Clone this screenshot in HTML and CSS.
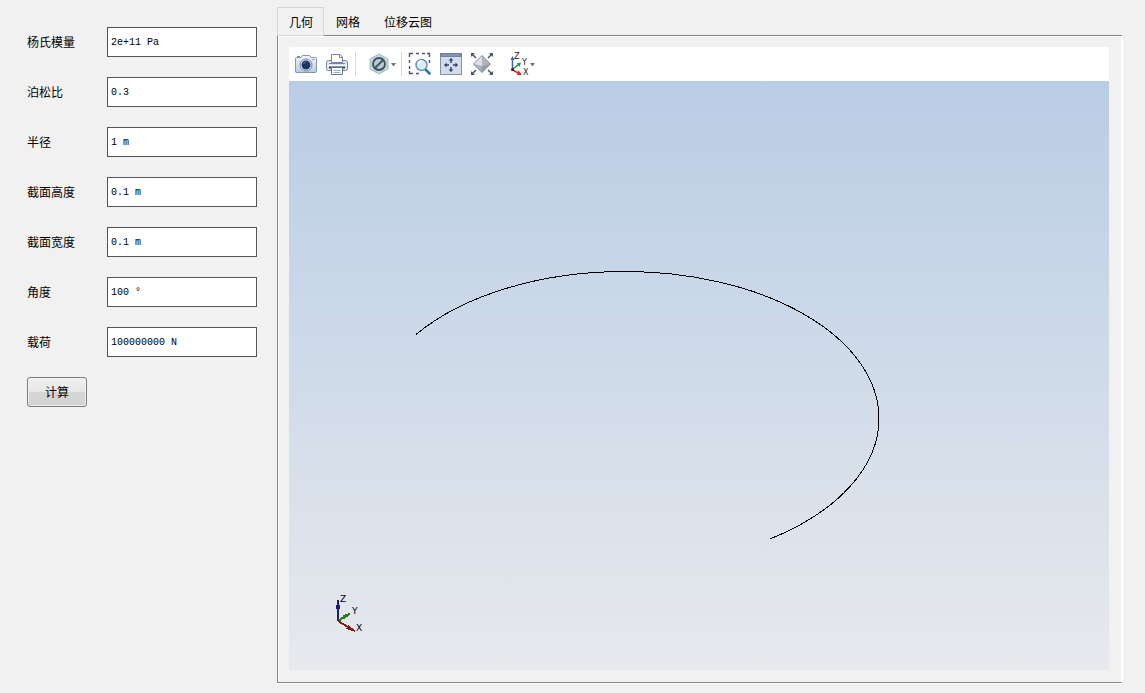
FILE: index.html
```html
<!DOCTYPE html>
<html lang="zh-CN">
<head>
<meta charset="utf-8">
<title>几何</title>
<link rel="stylesheet" href="styles.css">
</head>
<body>
<form class="params">
  <div class="row"><label for="young">杨氏模量</label><input class="field" id="young" type="text" value="2e+11 Pa"></div>
  <div class="row"><label for="poisson">泊松比</label><input class="field" id="poisson" type="text" value="0.3"></div>
  <div class="row"><label for="radius">半径</label><input class="field" id="radius" type="text" value="1 m"></div>
  <div class="row"><label for="height">截面高度</label><input class="field" id="height" type="text" value="0.1 m"></div>
  <div class="row"><label for="width">截面宽度</label><input class="field" id="width" type="text" value="0.1 m"></div>
  <div class="row"><label for="angle">角度</label><input class="field" id="angle" type="text" value="100 °"></div>
  <div class="row"><label for="load">载荷</label><input class="field" id="load" type="text" value="100000000 N"></div>
  <button class="compute" type="button">计算</button>
</form>
<main class="main">
  <div class="tabs" role="tablist">
    <button class="tab active" type="button" role="tab" aria-selected="true">几何</button>
    <button class="tab" type="button" role="tab" aria-selected="false">网格</button>
    <button class="tab" type="button" role="tab" aria-selected="false">位移云图</button>
  </div>
  <section class="panel" role="tabpanel">
    <div class="toolbar">
      <div class="group">
        <button class="tool" type="button" aria-label="截图">
          <svg width="24" height="24" viewBox="0 0 24 24">
            <defs><linearGradient id="cam" x1="0" y1="0" x2="0" y2="1"><stop offset="0" stop-color="#f4f8fc"/><stop offset="1" stop-color="#b9cbe2"/></linearGradient></defs>
            <path d="M2.5 5.5H7L8.5 3.5H15.5L17 5.5H21.5Q22.5 5.5 22.5 6.5V19.5Q22.5 20.5 21.5 20.5H2.5Q1.5 20.5 1.5 19.5V6.5Q1.5 5.5 2.5 5.5Z" fill="url(#cam)" stroke="#8093b5"/>
            <path d="M3 4.5H6" stroke="#8093b5"/>
            <circle cx="12" cy="13" r="6" fill="#dfe9f4" stroke="#7189ae"/>
            <circle cx="12" cy="13" r="4.5" fill="#1c3766"/>
            <path d="M9.5 12A3 3 0 0 1 12 10" fill="none" stroke="#5f7ca6"/>
            <path d="M18 7.5H20.5" stroke="#8295b3"/>
          </svg>
        </button>
        <button class="tool" type="button" aria-label="打印">
          <svg width="24" height="24" viewBox="0 0 24 24">
            <rect x="1.5" y="8.5" width="21" height="10" rx="2" fill="#dce6f2" stroke="#7484a6"/>
            <path d="M6.5 10.5V2.5H15L17.5 5V10.5Z" fill="#fff" stroke="#7484a6"/>
            <path d="M14.5 3V5.5H17" fill="none" stroke="#7484a6"/>
            <path d="M4 11.5H20" stroke="#7484a6"/>
            <path d="M2 13.5H22" stroke="#fff"/>
            <path d="M4 15.5H20" stroke="#31456f" stroke-width="2"/>
            <path d="M6.5 15.5H17.5V22.5H6.5Z" fill="#fff" stroke="#63749a"/>
            <path d="M8.5 18.5H15.5M8.5 20.5H15.5" stroke="#9aabc7"/>
          </svg>
        </button>
      </div>
      <div class="group display">
        <button class="tool" type="button" aria-label="显示模式">
          <svg width="22" height="24" viewBox="0 0 22 24">
            <path d="M10 2L19 7V17L10 22L1 17V7Z" fill="#c1d3d8" stroke="#a3bbc6"/>
            <path d="M10 3V21M2 7L18 17M18 7L2 17" stroke="#dfeaec"/>
            <circle cx="10" cy="12" r="6" fill="#b3cbd1" stroke="#3c5164" stroke-width="1.8"/>
            <path d="M6 16L14 8" stroke="#3c5164" stroke-width="1.8"/>
          </svg>
          <svg width="5" height="3" viewBox="0 0 5 3"><path d="M0 0H5L3 3H2Z" fill="#777"/></svg>
        </button>
      </div>
      <div class="group view">
        <button class="tool" type="button" aria-label="框选放大">
          <svg width="24" height="24" viewBox="0 0 24 24">
            <path d="M1.5 5V1.5H5M8 1.5H11M14 1.5H17M19 1.5H21.5V5M21.5 8V11M1.5 8V11M1.5 14V17M1.5 19V21.5H5M8 21.5H11" fill="none" stroke="#4a5682" stroke-width="1.4"/>
            <path d="M17 17L21.5 21.5" stroke="#2a78b8" stroke-width="2.6" stroke-linecap="round"/>
            <circle cx="13.5" cy="13" r="5.5" fill="#dcecf8" stroke="#6294c4" stroke-width="1.5"/>
            <path d="M10 12Q11 9 14 9" fill="none" stroke="#fff" stroke-width="2"/>
          </svg>
        </button>
        <button class="tool" type="button" aria-label="适应窗口">
          <svg width="24" height="24" viewBox="0 0 24 24">
            <rect x="1.5" y="1.5" width="21" height="21" fill="#d3dcea" stroke="#8191b0"/>
            <path d="M1 1H23V5H1Z" fill="#6f82a6"/>
            <path d="M3 3H21" stroke="#95a5c2"/>
            <path d="M12 6L14.5 8.5H12.7V11H11.3V8.5H9.5ZM12 20L9.5 17.5H11.3V15H12.7V17.5H14.5ZM5 13L7.5 10.5V12.3H10V13.7H7.5V15.5ZM19 13L16.5 10.5V12.3H14V13.7H16.5V15.5Z" fill="#303f67"/>
          </svg>
        </button>
        <button class="tool" type="button" aria-label="全部显示">
          <svg width="24" height="24" viewBox="0 0 24 24">
            <path d="M12 3.5L20.5 12L12 20.5Z" fill="#b0b5bf"/>
            <path d="M12 3.5L3.5 12L12 20.5Z" fill="#dde0e6"/>
            <path d="M3.5 12L12 14L20.5 12L12 20.5Z" fill="#858d9c" opacity=".6"/>
            <path d="M12 3.5L20.5 12L12 20.5L3.5 12Z" fill="none" stroke="#858c99"/>
            <path d="M1 1H5L1 5ZM23 1V5L19 1ZM1 23V19L5 23ZM23 23H19L23 19Z" fill="#45537a"/>
            <path d="M2 2L6 6M22 2L18 6M2 22L6 18M22 22L18 18" stroke="#45537a" stroke-width="1.5"/>
          </svg>
        </button>
      </div>
      <div class="group axes">
        <button class="tool" type="button" aria-label="视图方向">
          <svg class="orient" width="22" height="24" viewBox="0 0 22 24">
            <path d="M4.5 17.5V6" stroke="#3f66bb" stroke-width="1.5"/>
            <path d="M4.5 4L6.5 8H2.5Z" fill="#3f66bb"/>
            <path d="M4 17.5L10 13" stroke="#229443" stroke-width="1.5"/>
            <path d="M13 10.5L11.5 15L8.5 11.5Z" fill="#229443"/>
            <path d="M4 17.5L10 21" stroke="#ee2222" stroke-width="1.5"/>
            <path d="M14 23L9 23L10.5 18.5Z" fill="#ee2222"/>
            <circle cx="4.5" cy="17.5" r="1.5" fill="#222"/>
            <text x="6" y="7">Z</text>
            <text x="14" y="13">Y</text>
            <text x="15" y="23">X</text>
          </svg>
          <svg width="5" height="3" viewBox="0 0 5 3"><path d="M0 0H5L3 3H2Z" fill="#777"/></svg>
        </button>
      </div>
    </div>
    <div class="viewport">
      <svg class="curve" viewBox="0 0 820 589" shape-rendering="crispEdges">
        <path d="M127 253.5A254 147 0 0 1 336 190.5A254 147 0 0 1 590 337.5A254 147 0 0 1 481 458" fill="none" stroke="#000"/>
      </svg>
      <svg class="triad" width="30" height="40" viewBox="0 0 30 40" shape-rendering="crispEdges">
        <path d="M3 5V26" stroke="#1c1c80" stroke-width="2"/>
        <path d="M1 10H5V14H1Z" fill="#1c1c80"/>
        <path d="M3 26L9 22" stroke="#1c801c" stroke-width="2"/>
        <path d="M15 18L8 20L9 24L15 20Z" fill="#1c801c"/>
        <path d="M3 26L13 32" stroke="#801c1c" stroke-width="2"/>
        <path d="M20 37L11 34L13 30L20 35Z" fill="#801c1c"/>
        <text x="5" y="7">Z</text>
        <text x="17" y="19">Y</text>
        <text x="21" y="36">X</text>
      </svg>
    </div>
  </section>
</main>
</body>
</html>
```
FILE: styles.css
```css
* { box-sizing: border-box; }

body {
  margin: 0;
  min-height: 100vh;
  display: flex;
  gap: 20px;
  padding: 7px 22px 9px 27px;
  background: #f1f1f1;
  color: #000;
  font: 12px/18px "Noto Sans CJK SC", sans-serif;
}

button { font: inherit; color: inherit; }

.params {
  display: flex;
  flex-direction: column;
  align-items: flex-start;
  gap: 20px;
  width: 230px;
  padding-top: 20px;
}

.row {
  display: grid;
  grid-template-columns: 80px 1fr;
  align-items: center;
  width: 100%;
}

.field {
  width: 100%;
  height: 30px;
  padding: 0 3px;
  border: 1px solid #555558;
  border-radius: 0;
  background: #fff;
  color: #000;
  font: 10px "Liberation Mono", monospace;
}

.compute {
  width: 60px;
  height: 30px;
  padding: 0;
  border: 1px solid #7c7c7c;
  border-radius: 3px;
  background: linear-gradient(#f0f0f0, #e6e6e6 50%, #d6d6d6 50%, #d2d2d2);
  box-shadow: inset 0 0 0 1px #f0f0f0;
}

.main {
  flex: 1;
  min-width: 0;
  display: flex;
  flex-direction: column;
}

.tabs {
  display: flex;
  height: 28px;
}

.tab {
  height: 29px;
  padding: 0 12px;
  border: 0;
  background: none;
}

.tab.active {
  position: relative;
  padding: 0 10px 0 11px;
  border: 1px solid #d6d6d6;
  background: #f1f1f1;
}

.panel {
  flex: 1;
  display: flex;
  flex-direction: column;
  margin-bottom: 1px;
  padding: 11px 12px 12px 11px;
  border: 1px solid #85858c;
  border-right: 2px solid #fff;
  box-shadow: inset 1px 1px #fff, 0 1px #fff;
}

.toolbar {
  display: flex;
  align-items: center;
  height: 34px;
  padding-left: 5px;
  background: #fff;
}

.group {
  display: flex;
  gap: 7px;
}

.display {
  margin-left: 6px;
  padding: 0 5px 0 13px;
  border-left: 1px solid #d9d9d9;
}

.view {
  padding-left: 6px;
  border-left: 1px solid #d9d9d9;
}

.axes { margin-left: 14px; }

.tool {
  display: flex;
  align-items: center;
  padding: 0;
  border: 0;
  background: none;
}

.orient {
  overflow: visible;
  font: 8px "DejaVu Sans", sans-serif;
  fill: #222;
}

.viewport {
  position: relative;
  flex: 1;
  background: linear-gradient(#b9cde5, #e7e9ed);
}

.curve {
  display: block;
  width: 100%;
}

.triad {
  position: absolute;
  left: 46px;
  bottom: 35px;
  overflow: visible;
  font: 9px "DejaVu Sans", sans-serif;
}
```
